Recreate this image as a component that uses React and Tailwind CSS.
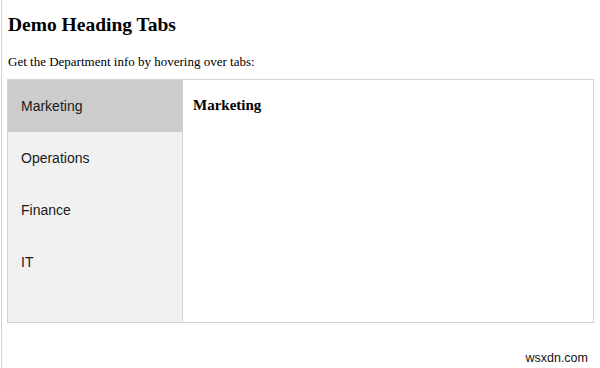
import React from "react";

const tabs = ["Marketing", "Operations", "Finance", "IT"];

export default function App() {
  return (
    <div className="h-[368px] w-[600px] bg-white overflow-hidden">
      <div className="ml-px h-full border-l border-[#d4d4d4] pl-[5px] pr-[5px] relative">
        <h3 className="pt-[15px] pl-[1px] text-[19.5px] leading-[20px] font-bold text-black font-['Liberation_Serif',serif]">
          Demo Heading Tabs
        </h3>
        <p className="mt-[19px] pl-[1px] text-[13px] leading-[15px] text-black font-['Liberation_Serif',serif]">
          Get the Department info by hovering over tabs:
        </p>

        {/* Tabs box */}
        <div className="mt-[10px] flex h-[244px] w-[587px]">
          <div className="w-[176px] border border-[#d2d2d2] bg-[#f1f1f1] flex flex-col">
            {tabs.map((t, i) => (
              <div
                key={t}
                className={
                  "h-[52px] shrink-0 flex items-center pl-[13px] text-[14px] text-[#1a1a1a] font-['Liberation_Sans',sans-serif] " +
                  (i === 0 ? "bg-[#cccccc]" : "")
                }
              >
                {t}
              </div>
            ))}
          </div>
          <div className="flex-1 border border-l-0 border-[#d2d2d2] px-[10px] pt-[16px]">
            <h3 className="text-[15px] leading-[18px] font-bold text-black font-['Liberation_Serif',serif]">
              Marketing
            </h3>
          </div>
        </div>

        <div className="absolute right-[12px] bottom-0 text-[12.5px] text-[#111] font-['Liberation_Sans',sans-serif]">
          wsxdn.com
        </div>
      </div>
    </div>
  );
}
